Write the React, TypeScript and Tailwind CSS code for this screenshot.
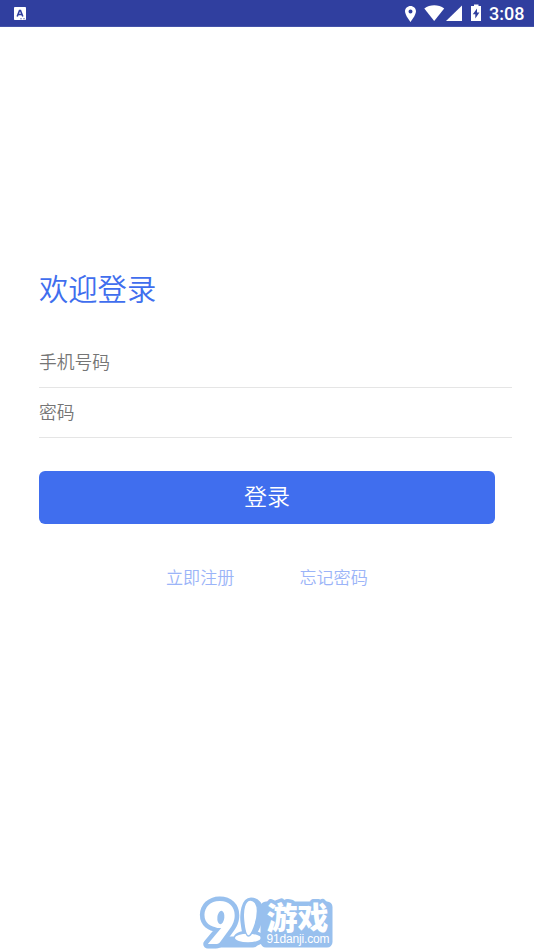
const fields = [
  { id: 'phone', label: '手机号码' },
  { id: 'password', label: '密码' },
];

const StatusBar = () => (
  <header className="flex h-[27px] items-center justify-between border-b border-[#4453a9] bg-[#303f9f] pr-[9px] pl-[14px]">
    <svg width="12" height="13" viewBox="0 0 12 13">
      <rect width="12" height="13" rx="0.8" fill="#fff" />
      <path d="M3.200 9.500 5.500 3.500h1L8.800 9.500M4.200 7.500h3.600" fill="none" stroke="#303f9f" strokeWidth="1.6" />
      <path d="M6 11.800h2M9 11.800h2" stroke="#303f9f" strokeWidth="0.6" />
    </svg>
    <div className="flex items-center">
      <svg width="80" height="26" viewBox="0 0 80 26" fill="#fff">
        <path
          fillRule="evenodd"
          d="M6.500 6C3.500 6 1 8.300 1 11.300c0 4 5.500 10.700 5.500 10.700S12 15.300 12 11.300C12 8.300 9.500 6 6.500 6Zm0 3.400a2 2 0 1 1 0 4 2 2 0 0 1 0-4Z"
        />
        <path d="M20.300 8.500C26 4.200 34.500 4.200 40.200 8.500L30.200 21Z" />
        <path d="M58 5.500V21H42Z" />
        <path
          fillRule="evenodd"
          d="M70 4.500h4.500v1.600H77v15H67v-15h3Zm3 4-4.200 5.700h2.500v4.300l4.100-6h-2.400Z"
        />
      </svg>
      <span className="ml-[5px] w-[36px] pt-px font-[Roboto] text-[18px] leading-[25px] font-medium text-white">3:08</span>
    </div>
  </header>
);

const Logo = () => (
  <svg width="136" height="54" viewBox="0 0 136 54" className="block overflow-visible">
    <g strokeLinejoin="round" strokeLinecap="round">
      <g fill="#98c0ee" stroke="#98c0ee">
        <path d="M22 46h32" strokeWidth="11" />
        <ellipse cx="50" cy="42.500" rx="11" ry="3.500" strokeWidth="9" />
        <path d="M52 6c-5 0-7 11-6 20 1 8 2 13 4 13 3 0 10-13 10-23 0-6-3-10-8-10Z" strokeWidth="9" />
      </g>
      <text
        x="3.200" y="47.500" fill="#fff" stroke="#98c0ee" strokeWidth="9" paintOrder="stroke" fontSize="59"
        fontWeight="900" fontFamily="Lato, sans-serif" transform="scale(1.03 1)"
      >
        9
      </text>
      <ellipse cx="20.500" cy="20.500" rx="11" ry="11.500" fill="#fff" />
      <ellipse cx="21.800" cy="21.500" rx="3.500" ry="6.800" transform="rotate(6 22 22)" fill="#98c0ee" />
      <ellipse cx="49" cy="42" rx="13" ry="4.200" fill="#fff" />
      <path
        d="M51.500 4c-6 0-8 10-7 20 1 10 3 16 5 16 3 0 9-14 9-25 0-7-3-11-7-11Z"
        fill="#fff"
        stroke="#98c0ee"
        strokeWidth="1.500"
      />
    </g>
    <g strokeLinejoin="round" stroke="#98c0ee">
      <rect x="67" y="11" width="61" height="35" fill="#98c0ee" strokeWidth="11" />
      <text
        x="67.500" y="33" fill="#fff" paintOrder="stroke" strokeWidth="7"
        fontSize="31" fontWeight="900" fontFamily="Noto Sans CJK SC, sans-serif"
      >
        游戏
      </text>
    </g>
    <text x="67.500" y="47" fill="#fff" fontSize="12" textLength="63" fontFamily="Liberation Sans, sans-serif">
      91danji.com
    </text>
  </svg>
);

export default function App() {
  return (
    <main className="flex h-[950px] w-[534px] flex-col overflow-hidden bg-white font-['Noto_Sans_CJK_SC',sans-serif]">
      <StatusBar />
      <section className="flex flex-1 flex-col pt-[238px] pl-[39px]">
        <h1 className="h-[73px] text-[29.300px] leading-[44px] font-[350] text-[#406eee]">欢迎登录</h1>
        {fields.map(({ id, label }) => (
          <div key={id} className="h-[50px] w-[473px] border-b border-[#e5e5e5] text-[17.800px] leading-[46px] font-[350] text-[#757575]">
            {label}
          </div>
        ))}
        <button className="mt-[33px] h-[53px] w-[456px] rounded-[6px] bg-[#406eee] pb-[5px] text-[23px] leading-[48px] font-[350] text-white">
          登录
        </button>
        <nav className="mt-[40px] flex gap-[65px] pl-[127px] text-[17.100px] leading-[26px] font-[350] text-[#9bb4f8]">
          <a>立即注册</a>
          <a>忘记密码</a>
        </nav>
      </section>
      <footer className="pl-[199px]">
        <Logo />
      </footer>
    </main>
  );
}
